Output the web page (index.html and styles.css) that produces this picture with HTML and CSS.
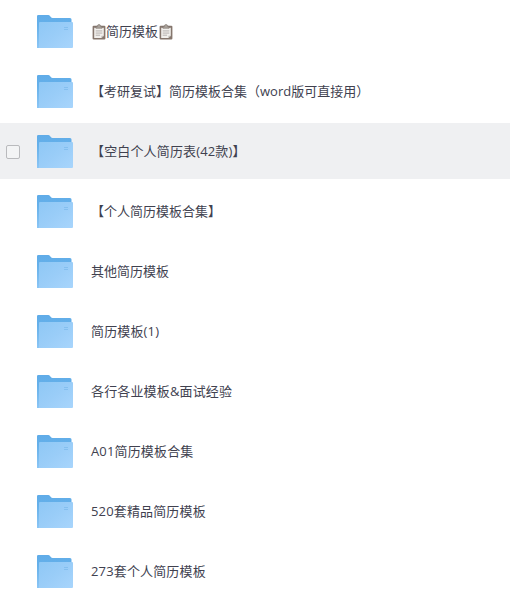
FILE: index.html
```html
<!DOCTYPE html>
<html lang="zh-CN">
<head>
  <meta charset="UTF-8">
  <title>简历模板</title>
  <link rel="stylesheet" href="styles.css">
</head>
<body>
  <svg class="defs" width="0" height="0">
    <defs>
      <linearGradient id="front" x1="0" y1="0" x2="1" y2="1">
        <stop offset="0" stop-color="#8fc8f5"/>
        <stop offset="0.5" stop-color="#9acdf8"/>
        <stop offset="1" stop-color="#a8d5fc"/>
      </linearGradient>
      <linearGradient id="back" x1="0" y1="0" x2="0" y2="1">
        <stop offset="0" stop-color="#60ace8"/>
        <stop offset="0.3" stop-color="#65b0ea"/>
        <stop offset="1" stop-color="#8cc6f5"/>
      </linearGradient>
    </defs>
    <symbol id="folder" viewBox="0 0 36 33">
      <path d="M0 1.2Q0 0 1.2 0H11.4Q12.2 0 12.8 .7L14 2.3Q14.6 3 15.6 3H33Q34.5 3 34.5 4.5V33H0Z" fill="url(#back)"/>
      <path d="M2 8Q2 7 3 7H35Q36 7 36 8V32Q36 33 35 33H2Z" fill="url(#front)"/>
      <path d="M27 12.5H31M27 14.5H31" stroke="#84bfef" stroke-width="1" fill="none"/>
    </symbol>
    <symbol id="clipboard" viewBox="0 0 13 15">
      <rect x=".5" y="1.6" width="12" height="13" rx="1" fill="#85766d"/>
      <path d="M2 3.4H11V11L8.8 13.2H2Z" fill="#f2f0ed"/>
      <path d="M8.8 13.2V11H11Z" fill="#bdb8b3"/>
      <path d="M3.4 6.5H9.6M3.4 8.5H9.6M3.4 10.5H7.5" stroke="#aaa6a3" stroke-width=".8"/>
      <path d="M3.6 4V2.2H5Q5 .4 6.5 .4T8 2.2H9.4V4Z" fill="#aaa39c" stroke="#71665f" stroke-width=".5"/>
    </symbol>
  </svg>

  <div class="file-list">
    <div class="file-row">
      <span class="check"></span>
      <svg class="folder"><use href="#folder"/></svg>
      <span class="name"><svg class="clip"><use href="#clipboard"/></svg>简历模板<svg class="clip"><use href="#clipboard"/></svg></span>
    </div>
    <div class="file-row">
      <span class="check"></span>
      <svg class="folder"><use href="#folder"/></svg>
      <span class="name">【考研复试】简历模板合集（word版可直接用）</span>
    </div>
    <div class="file-row active">
      <span class="check"></span>
      <svg class="folder"><use href="#folder"/></svg>
      <span class="name mixed">【空白个人简历表(42款)】</span>
    </div>
    <div class="file-row">
      <span class="check"></span>
      <svg class="folder"><use href="#folder"/></svg>
      <span class="name">【个人简历模板合集】</span>
    </div>
    <div class="file-row">
      <span class="check"></span>
      <svg class="folder"><use href="#folder"/></svg>
      <span class="name">其他简历模板</span>
    </div>
    <div class="file-row">
      <span class="check"></span>
      <svg class="folder"><use href="#folder"/></svg>
      <span class="name mixed">简历模板(1)</span>
    </div>
    <div class="file-row">
      <span class="check"></span>
      <svg class="folder"><use href="#folder"/></svg>
      <span class="name mixed">各行各业模板&amp;面试经验</span>
    </div>
    <div class="file-row">
      <span class="check"></span>
      <svg class="folder"><use href="#folder"/></svg>
      <span class="name mixed">A01简历模板合集</span>
    </div>
    <div class="file-row">
      <span class="check"></span>
      <svg class="folder"><use href="#folder"/></svg>
      <span class="name mixed">520套精品简历模板</span>
    </div>
    <div class="file-row">
      <span class="check"></span>
      <svg class="folder"><use href="#folder"/></svg>
      <span class="name mixed">273套个人简历模板</span>
    </div>
  </div>
</body>
</html>
```

FILE: styles.css
```css
body {
  margin: 0;
  background-color: #ffffff;
  font-family: "Open Sans", "Noto Sans CJK SC", sans-serif;
  font-size: 13px;
  color: #40414f;
}

.defs {
  display: block;
}

.file-list {
  display: flex;
  flex-direction: column;
  gap: 4px;
  padding-top: 3px;
}

.file-row {
  display: flex;
  align-items: center;
  height: 56px;
  padding-left: 6px;
}

.file-row.active {
  background-color: #eff0f2;
}

.check {
  box-sizing: border-box;
  width: 14px;
  height: 14px;
  margin-top: 2px;
  border: 1px solid #b9babd;
  border-radius: 2px;
  background-color: #f3f4f5;
  visibility: hidden;
}

.active .check {
  visibility: visible;
}

.folder {
  width: 36px;
  height: 33px;
  margin: 1px 18px 0 17px;
}

.name {
  line-height: 20px;
  white-space: nowrap;
}

.name.mixed {
  letter-spacing: .15px;
}

.clip {
  width: 14px;
  height: 16px;
  margin: 0 .5px;
  vertical-align: -4px;
}
```
